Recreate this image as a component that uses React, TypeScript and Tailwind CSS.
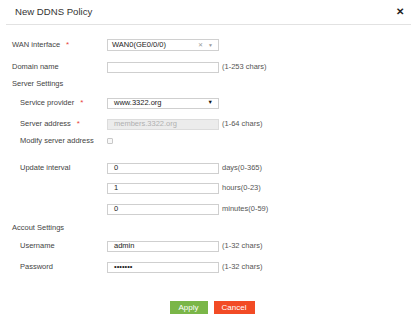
import type { ReactNode } from "react";

const Star = () => (
  <span className="ml-[6px] text-[#e8413b] text-[8px] leading-none">*</span>
);

type RowProps = {
  label?: string;
  indent?: boolean;
  required?: boolean;
  suffix?: string;
  className?: string;
  children?: ReactNode;
};

const Row = ({ label, indent, required, suffix, className, children }: RowProps) => (
  <div className={`flex items-center h-[12px] ${className ?? ""}`}>
    <div className={`w-[95px] flex items-center ${indent ? "pl-[8px]" : ""}`}>
      {label && <span className="text-[#444]">{label}</span>}
      {required && <Star />}
    </div>
    {children}
    {suffix && <span className="ml-[3px] text-[#555]">{suffix}</span>}
  </div>
);

const TextBox = ({ value, disabled }: { value?: string; disabled?: boolean }) => (
  <div
    className={`w-[112px] h-[11px] border flex items-center pl-[6px] ${
      disabled
        ? "bg-[#ececec] border-[#dcdcdc] text-[#b0b0b0]"
        : "bg-white border-[#cfcfcf] text-[#222]"
    }`}
  >
    {value}
  </div>
);

const App = () => {
  return (
    <div className="w-[417px] h-[326px] bg-white text-[7.5px] leading-none text-[#333] font-['Liberation_Sans',Arial,sans-serif]">
      {/* Header */}
      <div className="mx-[6px] h-[25px] flex items-center justify-between border-b border-[#e2e2e2] pl-[9px] pr-[7px]">
        <span className="text-[9.6px] text-[#333]">New DDNS Policy</span>
        <span className="text-[10px] font-bold text-[#222] leading-none">✕</span>
      </div>

      <div className="pl-[12px] flex flex-col">
        <Row label="WAN interface" required className="mt-[14px]">
          <div className="w-[112px] h-[12px] border border-[#d0d0d0] flex items-center pl-[4px] pr-[5px] text-[#222]">
            <span className="flex-1">WAN0(GE0/0/0)</span>
            <span className="text-[6px] text-[#999] mr-[5px]">✕</span>
            <span className="text-[5px] text-[#999]">▼</span>
          </div>
        </Row>

        <Row label="Domain name" suffix="(1-253 chars)" className="mt-[10px]">
          <TextBox />
        </Row>

        <div className="mt-[7px] h-[8px] flex items-center text-[#444]">Server Settings</div>

        <Row label="Service provider" indent required className="mt-[9px]">
          <div className="w-[112px] h-[11px] border border-[#cfcfcf] flex items-center pl-[6px] pr-[5px] text-[#222]">
            <span className="flex-1">www.3322.org</span>
            <span className="text-[5.5px] text-[#111]">▼</span>
          </div>
        </Row>

        <Row label="Server address" indent required suffix="(1-64 chars)" className="mt-[9px]">
          <TextBox value="members.3322.org" disabled />
        </Row>

        <Row label="Modify server address" indent className="mt-[5px]">
          <div className="w-[6px] h-[6px] border border-[#c8c8c8] rounded-[1px] bg-[#f8f8f8]" />
        </Row>

        <Row label="Update interval" indent suffix="days(0-365)" className="mt-[15px]">
          <TextBox value="0" />
        </Row>
        <Row suffix="hours(0-23)" className="mt-[8px]">
          <TextBox value="1" />
        </Row>
        <Row suffix="minutes(0-59)" className="mt-[9px]">
          <TextBox value="0" />
        </Row>

        <div className="mt-[9px] h-[8px] flex items-center text-[#444]">Accout Settings</div>

        <Row label="Username" indent suffix="(1-32 chars)" className="mt-[8px]">
          <TextBox value="admin" />
        </Row>
        <Row label="Password" indent suffix="(1-32 chars)" className="mt-[9px]">
          <TextBox value="•••••••" />
        </Row>
      </div>

      {/* Footer buttons */}
      <div className="mt-[28px] flex justify-center gap-[6px] pl-[7px]">
        <button className="w-[38px] h-[13px] bg-[#7ab648] text-white text-[8px] leading-none">
          Apply
        </button>
        <button className="w-[41px] h-[13px] bg-[#f24b25] text-white text-[8px] leading-none">
          Cancel
        </button>
      </div>
    </div>
  );
};

export default App;
